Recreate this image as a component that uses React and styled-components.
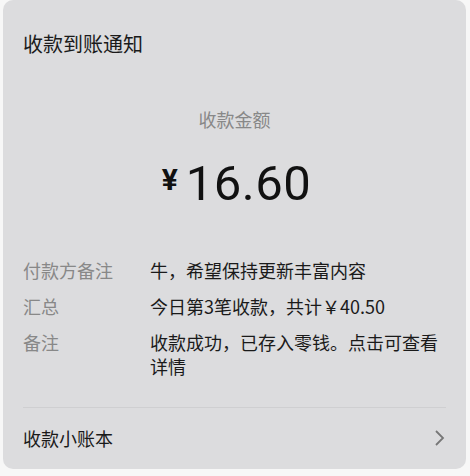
import React from 'react'
import styled, { createGlobalStyle } from 'styled-components'

const GlobalStyle = createGlobalStyle`
  html, body {
    margin: 0;
    padding: 0;
    background: #f7f7f7;
  }
  body {
    font-family: "Noto Sans CJK SC", "Noto Sans", sans-serif;
  }
`

const Card = styled.div`
  box-sizing: border-box;
  width: 463px;
  height: 469px;
  margin-left: 3px;
  background: #dcdcde;
  border-radius: 10px;
  padding: 0 20px;
  display: flex;
  flex-direction: column;
`

const Title = styled.div`
  font-size: 20px;
  color: #1a1a1a;
  line-height: 28px;
  margin-top: 30px;
`

const AmountBlock = styled.div`
  display: flex;
  flex-direction: column;
  align-items: center;
  margin-top: 48px;
`

const AmountLabel = styled.div`
  font-size: 18px;
  color: #888;
  line-height: 26px;
`

const Amount = styled.div`
  display: flex;
  align-items: baseline;
  margin-top: 22px;
  margin-left: 4px;
  color: #111;
  font-family: Roboto, "Noto Sans", sans-serif;
  line-height: 60px;
`

const Yen = styled.span`
  font-size: 30px;
  font-weight: 700;
  margin-right: 8px;
  position: relative;
  top: -10px;
`

const Digits = styled.span`
  font-size: 49px;
  font-weight: 400;
  letter-spacing: 0.5px;
`

const Details = styled.div`
  display: flex;
  flex-direction: column;
  gap: 12px;
  margin-top: 38px;
`

const Row = styled.div`
  display: grid;
  grid-template-columns: 127px 1fr;
  font-size: 18px;
  line-height: 24px;
`

const Label = styled.div`
  color: #888;
`

const Value = styled.div`
  color: #1a1a1a;
`

const Divider = styled.div`
  height: 1px;
  background: #cfcfd1;
  margin-top: 29px;
`

const Footer = styled.div`
  display: flex;
  align-items: center;
  justify-content: space-between;
  height: 59px;
  font-size: 18px;
  color: #1a1a1a;
`

const Chevron = () => (
  <svg width="12" height="18" viewBox="0 0 12 18">
    <path d="M2 2 L9 9 L2 16" fill="none" stroke="#777" strokeWidth="1.8" />
  </svg>
)

export default function App () {
  const rows = [
    { label: '付款方备注', value: '牛，希望保持更新丰富内容' },
    { label: '汇总', value: '今日第3笔收款，共计￥40.50' },
    { label: '备注', value: '收款成功，已存入零钱。点击可查看详情' },
  ]
  return (
    <>
      <GlobalStyle />
      <Card>
        <Title>收款到账通知</Title>
        <AmountBlock>
          <AmountLabel>收款金额</AmountLabel>
          <Amount>
            <Yen>¥</Yen>
            <Digits>16.60</Digits>
          </Amount>
        </AmountBlock>
        <Details>
          {rows.map((r) => (
            <Row key={r.label}>
              <Label>{r.label}</Label>
              <Value>{r.value}</Value>
            </Row>
          ))}
        </Details>
        <Divider />
        <Footer>
          <span>收款小账本</span>
          <Chevron />
        </Footer>
      </Card>
    </>
  )
}
